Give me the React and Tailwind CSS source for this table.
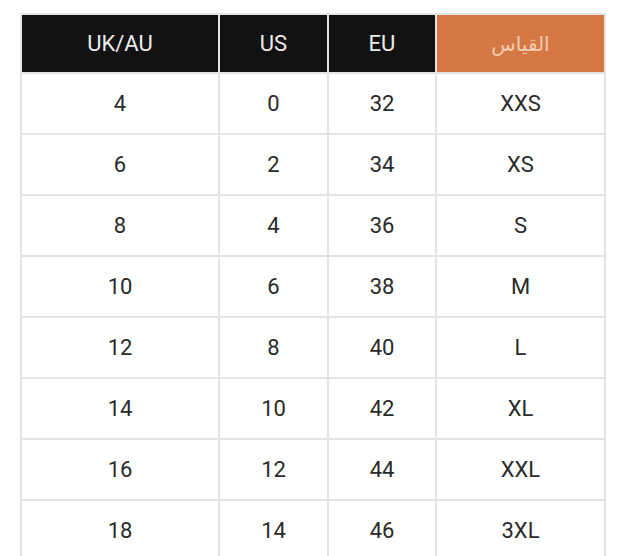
const rows = [
  ["4", "0", "32", "XXS"],
  ["6", "2", "34", "XS"],
  ["8", "4", "36", "S"],
  ["10", "6", "38", "M"],
  ["12", "8", "40", "L"],
  ["14", "10", "42", "XL"],
  ["16", "12", "44", "XXL"],
  ["18", "14", "46", "3XL"],
];

const App = () => {
  return (
    <div className="bg-white w-[625px] h-[556px] overflow-hidden pt-[13px] pl-[20px] font-['Roboto','Noto_Sans',sans-serif]">
      <table className="border-collapse border-2 border-[#e4e4e4] text-[22px] text-center">
        <colgroup>
          <col className="w-[198px]" />
          <col className="w-[109px]" />
          <col className="w-[108px]" />
          <col className="w-[169px]" />
        </colgroup>
        <thead>
          <tr className="h-[59px]">
            <th className="bg-[#121212] text-[#ececec] font-normal border-2 border-[#e4e4e4]">UK/AU</th>
            <th className="bg-[#121212] text-[#ececec] font-normal border-2 border-[#e4e4e4]">US</th>
            <th className="bg-[#121212] text-[#ececec] font-normal border-2 border-[#e4e4e4]">EU</th>
            <th className="bg-[#d67844] text-[#f4cbb0] font-normal border-2 border-[#e4e4e4] font-['Noto_Sans','DejaVu_Sans',sans-serif] text-[20px]" dir="rtl">القياس</th>
          </tr>
        </thead>
        <tbody>
          {rows.map((r, i) => (
            <tr key={i} className="h-[61px]">
              {r.map((c, j) => (
                <td key={j} className="border-2 border-[#e4e4e4] text-[#2a2a2a]">{c}</td>
              ))}
            </tr>
          ))}
        </tbody>
      </table>
    </div>
  );
};

export default App;
